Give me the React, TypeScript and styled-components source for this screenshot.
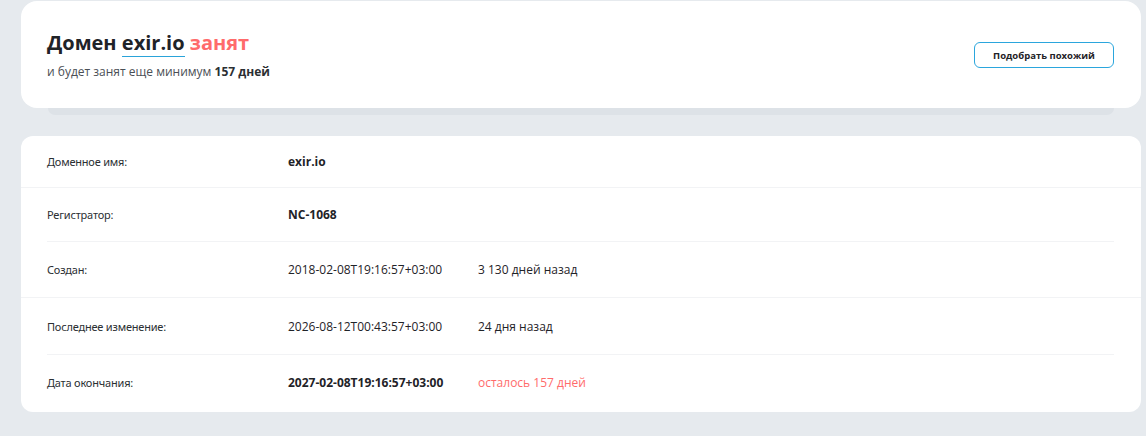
import styled, { createGlobalStyle } from "styled-components";

const GlobalStyle = createGlobalStyle`
  html, body {
    margin: 0;
    padding: 0;
    background: #e6eaee;
  }
  body {
    font-family: "Open Sans", "Noto Sans", sans-serif;
    color: #222;
  }
`;

const Page = styled.div`
  width: 1120px;
  padding: 1px 0 0 21px;
  display: flex;
  flex-direction: column;
`;

const HeadWrap = styled.div`
  display: flex;
  flex-direction: column;
  align-items: center;
`;

const HeadCard = styled.div`
  width: 100%;
  height: 107px;
  box-sizing: border-box;
  background: #fff;
  border-radius: 16px;
  padding: 0 27px 0 26px;
  display: flex;
  align-items: center;
  justify-content: space-between;
`;

const HeadShadow = styled.div`
  width: 1066px;
  height: 7px;
  background: #dde2e7;
  border-radius: 0 0 7px 7px;
`;

const TitleBlock = styled.div`
  display: flex;
  flex-direction: column;
  margin-top: -1px;
`;

const Title = styled.h1`
  margin: 0;
  font-size: 20px;
  line-height: 28px;
  font-weight: 700;
  color: #1f2328;
`;

const DomainLink = styled.span`
  border-bottom: 1px solid #2aa3d9;
`;

const Busy = styled.span`
  color: #ff6b6b;
`;

const Subtitle = styled.p`
  margin: 7px 0 0;
  font-size: 12px;
  line-height: 16px;
  color: #4a4f55;

  b {
    color: #2b2f33;
    font-weight: 700;
  }
`;

const SimilarButton = styled.button`
  width: 140px;
  height: 26px;
  box-sizing: border-box;
  background: #fff;
  border: 1px solid #2ba6dd;
  border-radius: 6px;
  font-family: "Open Sans", sans-serif;
  font-size: 9.5px;
  font-weight: 700;
  color: #1f2328;
  cursor: pointer;
  margin-top: 1px;
`;

const InfoCard = styled.div`
  margin-top: 21px;
  background: #fff;
  border-radius: 12px;
  padding-bottom: 2px;
`;

const Row = styled.div<{ $wide?: boolean; $last?: boolean; $h: number }>`
  height: ${(p) => p.$h}px;
  margin: ${(p) => (p.$wide ? "0" : "0 27px 0 26px")};
  padding: ${(p) => (p.$wide ? "0 27px 0 26px" : "0")};
  display: grid;
  grid-template-columns: 241px 190px 1fr;
  align-items: center;
  border-bottom: ${(p) => (p.$last ? "none" : "1px solid #f2f3f5")};
`;

const Label = styled.span`
  font-family: "Noto Sans", "Open Sans", sans-serif;
  font-size: 11px;
  color: #2b2f33;
  letter-spacing: -0.2px;
`;

const Value = styled.span<{ $bold?: boolean }>`
  font-size: 12px;
  font-weight: ${(p) => (p.$bold ? 700 : 400)};
  color: #1f2328;
`;

const Note = styled.span<{ $alert?: boolean }>`
  font-size: 12px;
  color: ${(p) => (p.$alert ? "#ff6b6b" : "#1f2328")};
`;

const rows = [
  { label: "Доменное имя:", value: "exir.io", bold: true, h: 51 },
  { label: "Регистратор:", value: "NC-1068", bold: true, h: 53 },
  { label: "Создан:", value: "2018-02-08T19:16:57+03:00", note: "3 130 дней назад", h: 55 },
  { label: "Последнее изменение:", value: "2026-08-12T00:43:57+03:00", note: "24 дня назад", h: 56 },
  { label: "Дата окончания:", value: "2027-02-08T19:16:57+03:00", bold: true, note: "осталось 157 дней", alert: true, h: 55 },
];

export default function App() {
  return (
    <>
      <GlobalStyle />
      <Page>
        <HeadWrap>
          <HeadCard>
            <TitleBlock>
              <Title>
                Домен <DomainLink>exir.io</DomainLink> <Busy>занят</Busy>
              </Title>
              <Subtitle>
                и будет занят еще минимум <b>157 дней</b>
              </Subtitle>
            </TitleBlock>
            <SimilarButton>Подобрать похожий</SimilarButton>
          </HeadCard>
          <HeadShadow />
        </HeadWrap>

        <InfoCard>
          {rows.map((r, i) => (
            <Row key={r.label} $h={r.h} $wide={i % 2 === 0} $last={i === rows.length - 1}>
              <Label>{r.label}</Label>
              <Value $bold={r.bold}>{r.value}</Value>
              {r.note ? <Note $alert={r.alert}>{r.note}</Note> : <span />}
            </Row>
          ))}
        </InfoCard>
      </Page>
    </>
  );
}
